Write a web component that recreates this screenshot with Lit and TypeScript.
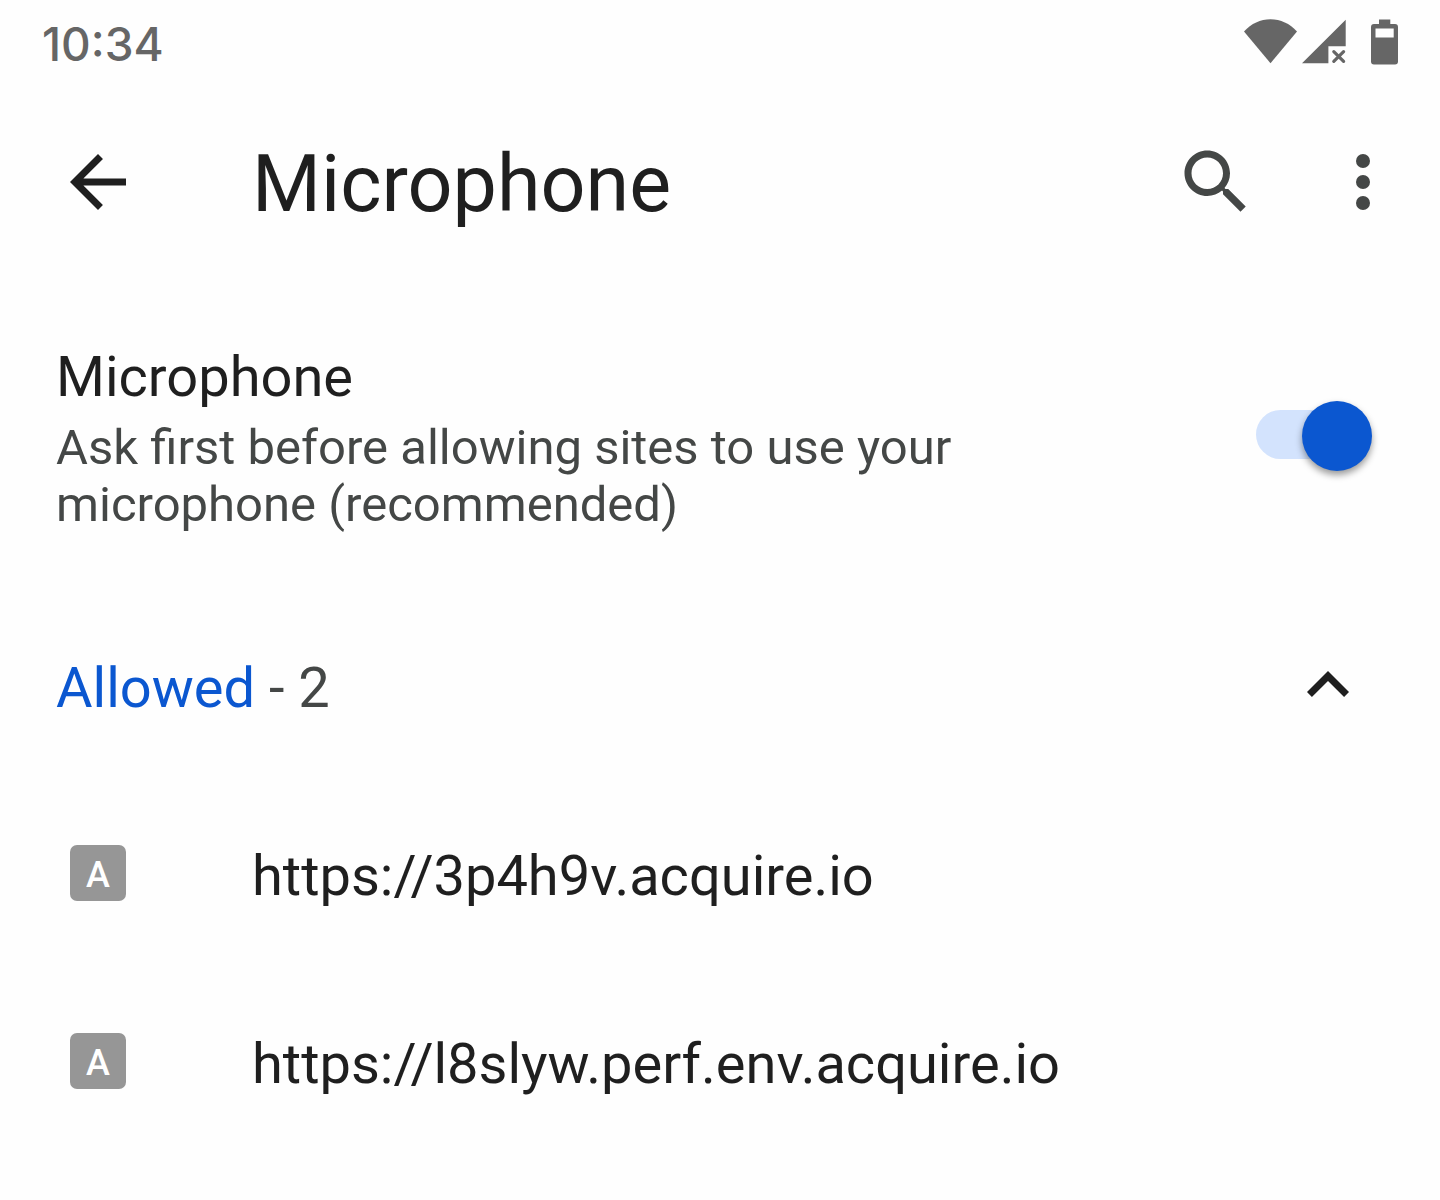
import { LitElement, html, css } from "lit";
import { customElement, state } from "lit/decorators.js";

@customElement("status-bar")
class StatusBar extends LitElement {
  static styles = css`
    :host {
      display: flex;
      align-items: center;
      justify-content: space-between;
      height: 86px;
      padding: 0 42px;
      color: #666666;
    }
    .clock {
      padding-top: 2px;
      font: 500 46px/56px Inter, Roboto, sans-serif;
    }
    .indicators {
      display: flex;
      align-items: center;
      padding-bottom: 2px;
    }
    .wifi {
      margin-right: 5px;
    }
    .signal {
      margin-right: 25px;
    }
    svg {
      display: block;
      fill: currentColor;
    }
  `;

  render() {
    return html`
      <time class="clock">10:34</time>
      <div class="indicators">
        <svg class="wifi" width="53" height="46" viewBox="0 0 53 46" role="img" aria-label="Wi-Fi">
          <path d="M0 12.5C7.2 4.6 16.5.3 26.5.3S45.8 4.6 53 12.5L26.5 44.3z" />
        </svg>
        <svg class="signal" width="44" height="46" viewBox="0 0 44 46" role="img" aria-label="No mobile data">
          <path d="M43.7 .7v26.600H26.400v17H0z" />
          <path
            d="M31.800 32.600l9.800 9.800M41.600 32.600l-9.800 9.800"
            stroke="currentColor"
            stroke-width="3.200"
            stroke-linecap="round"
          />
        </svg>
        <svg width="27" height="46" viewBox="0 0 27 46" role="img" aria-label="Battery">
          <path
            fill-rule="evenodd"
            d="M8 .5h11.300V5H24a3 3 0 0 1 3 3v34.500a3 3 0 0 1-3 3H3a3 3 0 0 1-3-3V8a3 3 0 0 1 3-3h5zM4.500 9.500v9h18.200v-9z"
          />
        </svg>
      </div>
    `;
  }
}

@customElement("app-root")
class AppRoot extends LitElement {
  @state() private enabled = true;
  @state() private expanded = true;

  private sites = ["https://3p4h9v.acquire.io", "https://l8slyw.perf.env.acquire.io"];

  static styles = css`
    :host {
      display: block;
      min-height: 100vh;
      background: #fefefe;
      color: #1f1f1f;
      font-family: Roboto, sans-serif;
    }
    h1,
    h2,
    p,
    ul {
      margin: 0;
      padding: 0;
      font-weight: 400;
    }
    button {
      border: 0;
      padding: 0;
      background: none;
      color: inherit;
      font: inherit;
      text-align: left;
      cursor: pointer;
    }
    .icon {
      display: block;
      width: 84px;
      height: 84px;
      fill: currentColor;
    }
    .toolbar {
      display: flex;
      align-items: center;
      height: 192px;
      padding: 0 35px 0 56px;
    }
    .title {
      flex: 1;
      margin-left: 112px;
      padding-top: 4px;
      font-size: 79px;
      line-height: 92px;
    }
    .actions {
      display: flex;
      gap: 63px;
      color: #444746;
    }
    .preference {
      display: flex;
      align-items: center;
      justify-content: space-between;
      padding: 60px 68px 61px 56px;
    }
    .text {
      padding-top: 6px;
    }
    .label {
      display: block;
      margin-bottom: 9px;
      font-size: 56px;
      line-height: 66px;
    }
    .summary {
      max-width: 980px;
      color: #444746;
      font-size: 49px;
      line-height: 57px;
    }
    .switch {
      appearance: none;
      display: grid;
      align-items: center;
      flex: none;
      width: 116px;
      height: 70px;
      margin: 0;
      cursor: pointer;
    }
    .switch::before,
    .switch::after {
      content: "";
      grid-area: 1 / 1;
    }
    .switch::before {
      width: 108px;
      height: 49px;
      margin-bottom: 2px;
      border-radius: 25px;
      background: #e3e3e3;
    }
    .switch::after {
      width: 70px;
      height: 70px;
      border-radius: 50%;
      background: #747775;
      box-shadow: 0 4px 7px rgba(0, 0, 0, 0.4);
    }
    .switch:checked::before {
      background: #d3e3fd;
    }
    .switch:checked::after {
      justify-self: end;
      background: #0b57d0;
    }
    .group {
      display: flex;
      align-items: center;
      justify-content: space-between;
      width: 100%;
      height: 188px;
      padding: 0 70px 0 56px;
      font-size: 56px;
      line-height: 66px;
    }
    .count {
      color: #444746;
    }
    .status {
      color: #0b57d0;
    }
    .chevron {
      padding-bottom: 6px;
    }
    .collapsed .icon {
      transform: rotate(180deg);
    }
    .sites {
      list-style: none;
    }
    .site {
      display: flex;
      align-items: center;
      height: 188px;
      padding: 0 56px 0 70px;
      color: inherit;
      font-size: 56px;
      line-height: 66px;
      text-decoration: none;
    }
    .favicon {
      height: 62px;
      margin-right: 126px;
    }
    .badge {
      display: block;
      width: 56px;
      height: 56px;
      border-radius: 7px;
      background: #969696;
      color: #fff;
      font-size: 36px;
      font-weight: 500;
      line-height: 60px;
      text-align: center;
    }
  `;

  render() {
    return html`
      <status-bar></status-bar>
      <header class="toolbar">
        <button type="button" aria-label="Back">
          <svg class="icon" viewBox="0 0 24 24">
            <path d="M20 11H7.830l5.590-5.590L12 4l-8 8 8 8 1.410-1.410L7.830 13H20v-2z" />
          </svg>
        </button>
        <h1 class="title">Microphone</h1>
        <div class="actions">
          <button type="button" aria-label="Search">
            <svg class="icon" viewBox="0 0 24 24">
              <path
                d="M15.500 14h-.790l-.280-.270C15.410 12.590 16 11.110 16 9.500 16 5.910 13.090 3 9.500 3S3 5.910 3 9.500 5.910 16 9.500 16c1.610 0 3.090-.590 4.230-1.570l.270.280v.790l5 4.990L20.490 19l-4.990-5zm-6 0C7.010 14 5 11.990 5 9.500S7.010 5 9.500 5 14 7.010 14 9.500 11.990 14 9.500 14z"
              />
            </svg>
          </button>
          <button type="button" aria-label="More options">
            <svg class="icon" viewBox="0 0 24 24">
              <circle cx="12" cy="6" r="2" />
              <circle cx="12" cy="12" r="2" />
              <circle cx="12" cy="18" r="2" />
            </svg>
          </button>
        </div>
      </header>
      <main>
        <div class="preference">
          <div class="text">
            <label class="label" for="mic">Microphone</label>
            <p class="summary" id="mic-summary">
              Ask first before allowing sites to use your microphone (recommended)
            </p>
          </div>
          <input
            class="switch"
            id="mic"
            type="checkbox"
            role="switch"
            aria-describedby="mic-summary"
            .checked=${this.enabled}
            @change=${(e: Event) => (this.enabled = (e.target as HTMLInputElement).checked)}
          />
        </div>
        <h2>
          <button
            class="group ${this.expanded ? "" : "collapsed"}"
            type="button"
            aria-expanded=${this.expanded}
            @click=${() => (this.expanded = !this.expanded)}
          >
            <span class="count"><span class="status">Allowed</span> - ${this.sites.length}</span>
            <span class="chevron">
              <svg class="icon" viewBox="0 0 24 24" aria-hidden="true">
                <path d="M12 8l-6 6 1.410 1.410L12 10.830l4.590 4.580L18 14z" />
              </svg>
            </span>
          </button>
        </h2>
        ${this.expanded
          ? html`<ul class="sites">
              ${this.sites.map(
                (site) => html`<li>
                  <a class="site" href=${site}>
                    <span class="favicon" aria-hidden="true"><span class="badge">A</span></span>
                    <span>${site}</span>
                  </a>
                </li>`
              )}
            </ul>`
          : null}
      </main>
    `;
  }
}
